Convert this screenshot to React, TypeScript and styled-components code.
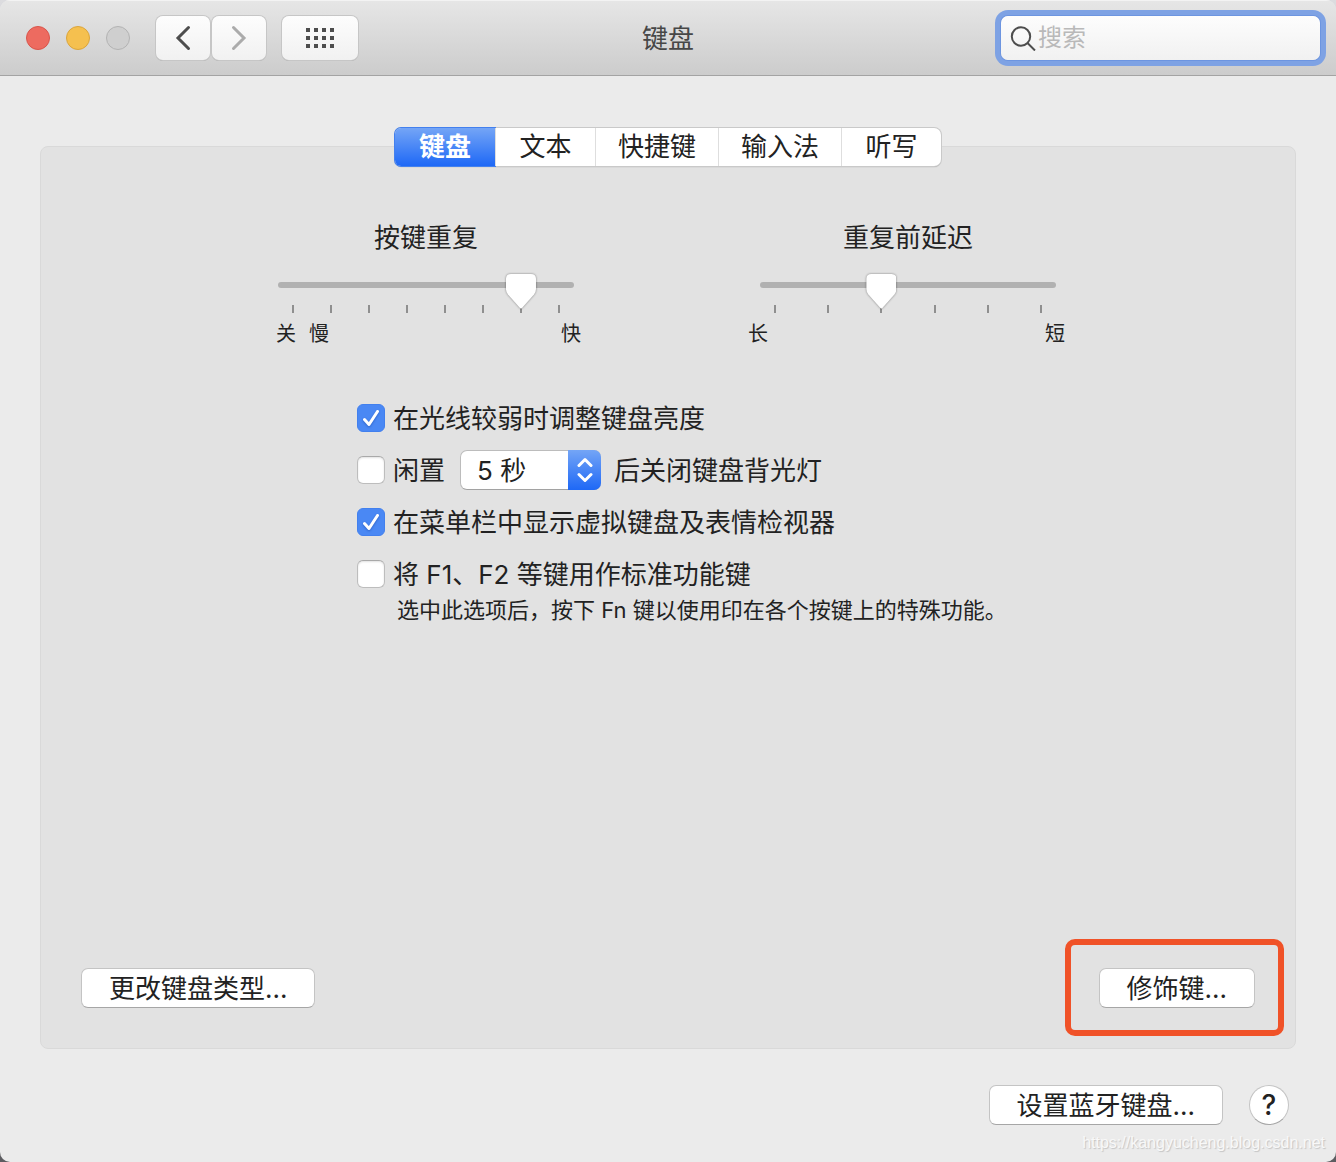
import React, { useState } from "react";
import styled, { createGlobalStyle, css } from "styled-components";

const GlobalStyle = createGlobalStyle`
  *, *::before, *::after { box-sizing: border-box; }
  body {
    margin: 0;
    background: linear-gradient(#dcdcdf, #5c5c60);
    color: #222;
    font-family: Inter, "Noto Sans CJK SC", sans-serif;
    font-size: 26px;
    line-height: 40px;
  }
  button, input, select { font: inherit; color: inherit; margin: 0; }
`;

const Window = styled.div`
  position: relative;
  display: flex;
  flex-direction: column;
  min-height: 100vh;
  border-radius: 10px;
  overflow: hidden;
  background: #ebebeb;
`;

const TitleBar = styled.header`
  display: grid;
  grid-template-columns: 1fr auto 1fr;
  align-items: center;
  height: 76px;
  padding: 0 16px;
  background: linear-gradient(#e6e6e6, #cccccc);
  border-top: 1px solid #f3f3f3;
  border-bottom: 1px solid #a3a3a3;
`;

const Title = styled.h1`
  margin: 0;
  padding-top: 2px;
  font-size: 26px;
  font-weight: 400;
  color: #474747;
`;

const TitleTools = styled.div`
  display: flex;
  align-items: center;
  gap: 16px;
  padding-left: 10px;
`;

const Lights = styled.div`
  display: flex;
  gap: 16px;
  margin-right: 10px;
`;

const Light = styled.button<{ $fill: string; $edge: string }>`
  width: 24px;
  height: 24px;
  padding: 0;
  border: 1px solid ${(p) => p.$edge};
  border-radius: 50%;
  background: ${(p) => p.$fill};
`;

const NavPair = styled.div`
  display: flex;
  gap: 2px;
`;

const ToolButton = styled.button<{ $wide?: boolean }>`
  display: flex;
  align-items: center;
  justify-content: center;
  width: ${(p) => (p.$wide ? 76 : 54)}px;
  height: 44px;
  padding: 0;
  border: 0;
  border-radius: 7px;
  background: linear-gradient(#fdfdfd, #f1f1f1);
  box-shadow: 0 0 0 1px #c6c6c6, 0 1px 0 0 #a0a0a0;
`;

const SearchBox = styled.label`
  display: flex;
  align-items: center;
  justify-self: end;
  width: 100%;
  max-width: 319px;
  height: 44px;
  padding-left: 9px;
  border-radius: 7px;
  background: linear-gradient(#fdfdfd, #f1f1f1);
  box-shadow: 0 0 0 1px #6d95e0, 0 0 0 6px #7ea2e4;
`;

const SearchInput = styled.input`
  flex: 1;
  min-width: 0;
  padding: 0 0 0 2px;
  border: 0;
  outline: 0;
  background: transparent;
  font-size: 24px;
  &::placeholder { color: #b9b9b9; opacity: 1; }
`;

const Body = styled.main`
  display: flex;
  flex: 1;
  flex-direction: column;
  padding: 52px 40px 0;
`;

const Tabs = styled.div`
  z-index: 1;
  display: flex;
  align-self: center;
  margin-bottom: -20px;
  border-radius: 7px;
  background: #fff;
  box-shadow: 0 0 0 1px #c9c9c9, 0 1px 1px 0 #8f8f8f;
`;

const Tab = styled.button<{ $active: boolean }>`
  min-width: 100px;
  height: 38px;
  padding: 0 22px;
  border: 0;
  border-left: 1px solid #dedede;
  background: transparent;
  line-height: 38px;
  &:first-child { border-left: 0; border-radius: 6px 0 0 6px; }
  ${(p) =>
    p.$active &&
    css`
      background: linear-gradient(#74a5f6, #1e68f6);
      box-shadow: 0 0 0 1px #4380ee;
      color: #fff;
      font-weight: 600;
    `}
`;

const Panel = styled.section`
  display: flex;
  flex: 1;
  flex-direction: column;
  padding: 71px 40px 40px;
  border: 1px solid #d9d9d9;
  border-radius: 8px;
  background: #e2e2e2;
`;

const Sliders = styled.div`
  display: flex;
  justify-content: center;
  gap: 162px;
  padding-right: 2px;
`;

const SliderBlock = styled.div`
  display: flex;
  flex-direction: column;
  width: 320px;
`;

const SliderTitle = styled.label`
  text-align: center;
`;

const Track = styled.div`
  display: grid;
  align-items: center;
  margin: 15px 12px 0;
  &::before {
    content: "";
    grid-area: 1 / 1;
    height: 6px;
    border-radius: 3px;
    background: #b1b1b1;
  }
`;

const Range = styled.input`
  appearance: none;
  grid-area: 1 / 1;
  z-index: 1;
  width: 100%;
  height: 24px;
  background: transparent;
  outline: 0;
  filter: drop-shadow(0 0 1px rgba(0, 0, 0, 0.45));
  &::-webkit-slider-runnable-track {
    height: 6px;
    background: transparent;
  }
  &::-webkit-slider-thumb {
    appearance: none;
    width: 30px;
    height: 35px;
    margin-top: -8px;
    background: #fff;
    clip-path: path("M5 0H25Q30 0 30 5V15Q30 18 28 20.500L16 34Q15 35 14 34L2 20.500Q0 18 0 15V5Q0 0 5 0Z");
  }
`;

const Ticks = styled.div`
  display: flex;
  justify-content: space-between;
  margin-top: 8px;
  padding: 0 26px;
`;

const Tick = styled.span`
  width: 2px;
  height: 8px;
  background: #8f8f8f;
`;

const Scale = styled.div<{ $inset?: boolean }>`
  display: flex;
  gap: 13px;
  margin-top: 9px;
  padding: ${(p) => (p.$inset ? "0 5px 0 10px" : "0 3px 0 0")};
  font-size: 20px;
  line-height: 24px;
  & > :last-child { margin-left: auto; }
`;

const Options = styled.div`
  display: flex;
  flex-direction: column;
  gap: 12px;
  width: 100%;
  max-width: 822px;
  margin: 52px auto 0;
  padding-left: 100px;
`;

const OptionRow = styled.div`
  display: flex;
  align-items: center;
  height: 40px;
`;

const OptionLabel = styled.label`
  display: flex;
  align-items: center;
  gap: 8px;
  white-space: nowrap;
`;

const OptionText = styled.span`
  display: block;
  padding-top: 2px;
`;

const CheckWrap = styled.span`
  position: relative;
  display: flex;
`;

const CheckInput = styled.input`
  appearance: none;
  width: 28px;
  height: 28px;
  border: 1px solid #bdbdbd;
  border-top-color: #a9a9a9;
  border-radius: 6px;
  background: #fff;
  box-shadow: inset 0 1px 2px rgba(0, 0, 0, 0.12);
  &:checked {
    border-color: #4280ee;
    background: #4a88f4;
    box-shadow: none;
  }
  &:not(:checked) + svg { display: none; }
`;

const CheckMark = styled.svg`
  position: absolute;
  inset: 0;
  pointer-events: none;
  filter: drop-shadow(0 1px 1px rgba(0, 40, 130, 0.4));
`;

const SelectWrap = styled.span`
  position: relative;
  display: flex;
  margin: 0 13px 0 15px;
`;

const Select = styled.select`
  appearance: none;
  width: 141px;
  height: 40px;
  padding: 1px 34px 0 16px;
  border: 1px solid #bcbcbc;
  border-bottom-color: #a2a2a2;
  border-radius: 7px;
  background: #fff;
  line-height: 38px;
`;

const SelectCap = styled.span`
  position: absolute;
  inset: 0 0 0 auto;
  display: flex;
  align-items: center;
  justify-content: center;
  width: 33px;
  border-radius: 0 7px 7px 0;
  background: linear-gradient(#74a5f6, #1e68f6);
  pointer-events: none;
`;

const Hint = styled.p`
  margin: -12px 0 0;
  padding-left: 40px;
  font-size: 22px;
  line-height: 32px;
  white-space: nowrap;
`;

const PanelActions = styled.div`
  display: flex;
  justify-content: space-between;
  margin-top: auto;
  padding-top: 40px;
`;

const PushButton = styled.button`
  height: 40px;
  padding: 2px 27px 0;
  border: 1px solid #c4c4c4;
  border-bottom-color: #a6a6a6;
  border-radius: 7px;
  background: #fff;
  line-height: 36px;
`;

const Marked = styled.div`
  position: relative;
  display: flex;
  &::after {
    content: "";
    position: absolute;
    inset: -29px -29px -28px -34px;
    border: 6px solid #f05228;
    border-radius: 10px;
    pointer-events: none;
  }
`;

const Footer = styled.footer`
  display: flex;
  justify-content: flex-end;
  gap: 26px;
  padding: 36px 7px 37px;
`;

const HelpButton = styled.button`
  width: 40px;
  height: 40px;
  padding: 0;
  border: 1px solid #c4c4c4;
  border-bottom-color: #a6a6a6;
  border-radius: 50%;
  background: #fff;
  font-size: 28px;
  font-weight: 500;
  line-height: 38px;
`;

const Watermark = styled.span`
  position: absolute;
  right: 11px;
  bottom: 9px;
  color: #f8f8f8;
  font-family: "Liberation Sans", sans-serif;
  font-size: 16px;
  line-height: 20px;
  text-shadow: 1px 1px 1px #c4c4c4;
`;

const TABS = ["键盘", "文本", "快捷键", "输入法", "听写"];

function Checkbox({ defaultChecked, children }: { defaultChecked?: boolean; children: React.ReactNode }) {
  return (
    <OptionLabel>
      <CheckWrap>
        <CheckInput type="checkbox" defaultChecked={defaultChecked} />
        <CheckMark width="28" height="28" viewBox="0 0 28 28" fill="none" aria-hidden="true">
          <path d="M7.500 15.500L12 20.500L20.500 7.500" stroke="#fff" strokeWidth="3" strokeLinecap="round" strokeLinejoin="round" />
        </CheckMark>
      </CheckWrap>
      <OptionText>{children}</OptionText>
    </OptionLabel>
  );
}

interface SliderProps {
  id: string;
  title: string;
  steps: number;
  value: number;
  labels: string[];
  inset?: boolean;
}

function Slider({ id, title, steps, value, labels, inset }: SliderProps) {
  return (
    <SliderBlock>
      <SliderTitle htmlFor={id}>{title}</SliderTitle>
      <Track>
        <Range id={id} type="range" min={0} max={steps - 1} defaultValue={value} />
      </Track>
      <Ticks>
        {Array.from({ length: steps }, (_, i) => (
          <Tick key={i} />
        ))}
      </Ticks>
      <Scale $inset={inset}>
        {labels.map((l) => (
          <span key={l}>{l}</span>
        ))}
      </Scale>
    </SliderBlock>
  );
}

export default function App() {
  const [tab, setTab] = useState(0);
  return (
    <Window>
      <GlobalStyle />
      <TitleBar>
        <TitleTools>
          <Lights>
            <Light aria-label="关闭" $fill="#ed6b60" $edge="#d9554b" />
            <Light aria-label="最小化" $fill="#f5c04f" $edge="#dba53c" />
            <Light aria-label="缩放" $fill="#cfcfcf" $edge="#b3b3b3" />
          </Lights>
          <NavPair>
            <ToolButton aria-label="后退">
              <svg width="16" height="26" viewBox="0 0 16 26" fill="none" stroke="#4d4d4d" strokeWidth="3" strokeLinecap="round">
                <path d="M13.500 2.500L3 13L13.500 23.500" />
              </svg>
            </ToolButton>
            <ToolButton aria-label="前进">
              <svg width="16" height="26" viewBox="0 0 16 26" fill="none" stroke="#ababab" strokeWidth="3" strokeLinecap="round">
                <path d="M2.500 2.500L13 13L2.500 23.500" />
              </svg>
            </ToolButton>
          </NavPair>
          <ToolButton $wide aria-label="显示全部">
            <svg width="28" height="20" viewBox="0 0 28 20" fill="#4d4d4d">
              {[0, 8, 16].map((y) => [0, 8, 16, 24].map((x) => <rect key={`${x}-${y}`} x={x} y={y} width="4" height="4" />))}
            </svg>
          </ToolButton>
        </TitleTools>
        <Title>键盘</Title>
        <SearchBox>
          <svg width="26" height="26" viewBox="0 0 26 26" fill="none" stroke="#4d4d4d" strokeWidth="2" aria-hidden="true">
            <circle cx="11" cy="11.500" r="9.200" />
            <path d="M17.500 18L25 25.500" />
          </svg>
          <SearchInput type="text" placeholder="搜索" aria-label="搜索" />
        </SearchBox>
      </TitleBar>

      <Body>
        <Tabs role="tablist">
          {TABS.map((t, i) => (
            <Tab key={t} role="tab" aria-selected={i === tab} $active={i === tab} onClick={() => setTab(i)}>
              {t}
            </Tab>
          ))}
        </Tabs>
        <Panel>
          <Sliders>
            <Slider id="repeat" title="按键重复" steps={8} value={6} labels={["关", "慢", "快"]} inset />
            <Slider id="delay" title="重复前延迟" steps={6} value={2} labels={["长", "短"]} />
          </Sliders>
          <Options>
            <OptionRow>
              <Checkbox defaultChecked>在光线较弱时调整键盘亮度</Checkbox>
            </OptionRow>
            <OptionRow>
              <Checkbox>闲置</Checkbox>
              <SelectWrap>
                <Select id="idle" defaultValue="5" aria-label="闲置时间">
                  <option value="5">5 秒</option>
                </Select>
                <SelectCap>
                  <svg width="16" height="26" viewBox="0 0 16 26" fill="none" stroke="#fff" strokeWidth="3" strokeLinecap="round" strokeLinejoin="round">
                    <path d="M2 8.500L8 2.500L14 8.500M2 17.500L8 23.500L14 17.500" />
                  </svg>
                </SelectCap>
              </SelectWrap>
              <OptionText as="label" htmlFor="idle">
                后关闭键盘背光灯
              </OptionText>
            </OptionRow>
            <OptionRow>
              <Checkbox defaultChecked>在菜单栏中显示虚拟键盘及表情检视器</Checkbox>
            </OptionRow>
            <OptionRow>
              <Checkbox>将 F1、F2 等键用作标准功能键</Checkbox>
            </OptionRow>
            <Hint>选中此选项后，按下 Fn 键以使用印在各个按键上的特殊功能。</Hint>
          </Options>
          <PanelActions>
            <PushButton>更改键盘类型...</PushButton>
            <Marked>
              <PushButton>修饰键...</PushButton>
            </Marked>
          </PanelActions>
        </Panel>
        <Footer>
          <PushButton>设置蓝牙键盘...</PushButton>
          <HelpButton aria-label="帮助">?</HelpButton>
        </Footer>
      </Body>
      <Watermark>https://kangyucheng.blog.csdn.net</Watermark>
    </Window>
  );
}
